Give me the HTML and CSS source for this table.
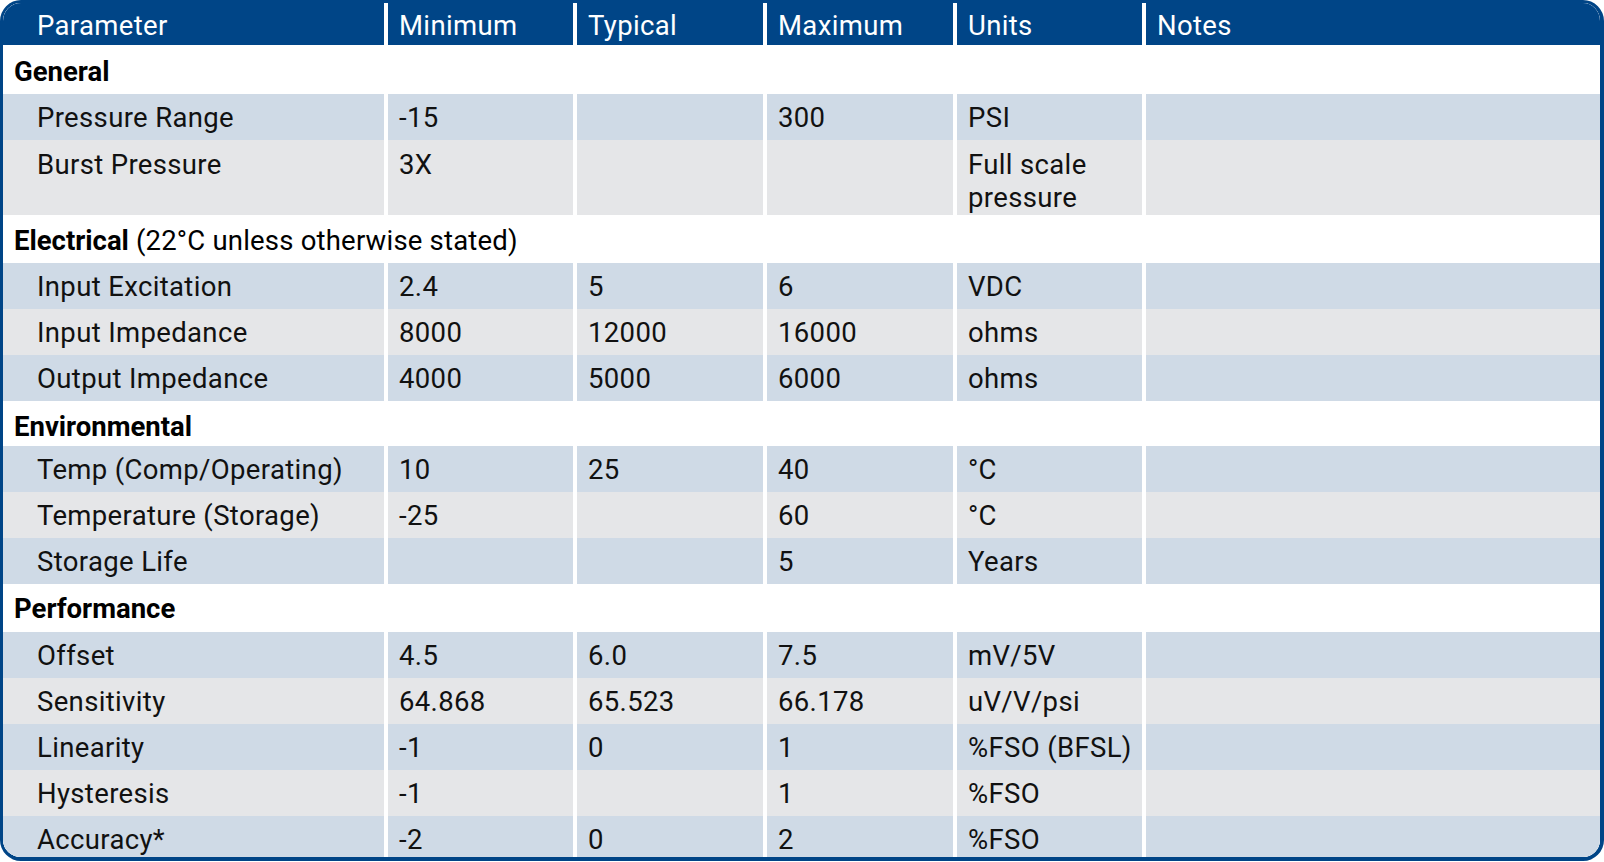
FILE: index.html
```html
<!DOCTYPE html>
<html lang="en">
<head>
<meta charset="utf-8">
<title>Specifications</title>
<link rel="stylesheet" href="styles.css">
</head>
<body>
<div class="spec">
  <div class="row head">
    <div class="cell first">Parameter</div>
    <div class="cell">Minimum</div>
    <div class="cell">Typical</div>
    <div class="cell">Maximum</div>
    <div class="cell">Units</div>
    <div class="cell">Notes</div>
  </div>

  <div class="section top"><b>General</b></div>
  <div class="row blue">
    <div class="cell first">Pressure Range</div><div class="cell">-15</div><div class="cell"></div><div class="cell">300</div><div class="cell">PSI</div><div class="cell"></div>
  </div>
  <div class="row gray tall">
    <div class="cell first">Burst Pressure</div><div class="cell">3X</div><div class="cell"></div><div class="cell"></div><div class="cell">Full scale<br>pressure</div><div class="cell"></div>
  </div>

  <div class="section elec"><b>Electrical</b> (22°C unless otherwise stated)</div>
  <div class="row blue">
    <div class="cell first">Input Excitation</div><div class="cell">2.4</div><div class="cell">5</div><div class="cell">6</div><div class="cell">VDC</div><div class="cell"></div>
  </div>
  <div class="row gray">
    <div class="cell first">Input Impedance</div><div class="cell">8000</div><div class="cell">12000</div><div class="cell">16000</div><div class="cell">ohms</div><div class="cell"></div>
  </div>
  <div class="row blue">
    <div class="cell first">Output Impedance</div><div class="cell">4000</div><div class="cell">5000</div><div class="cell">6000</div><div class="cell">ohms</div><div class="cell"></div>
  </div>

  <div class="section env"><b>Environmental</b></div>
  <div class="row blue">
    <div class="cell first">Temp (Comp/Operating)</div><div class="cell">10</div><div class="cell">25</div><div class="cell">40</div><div class="cell">°C</div><div class="cell"></div>
  </div>
  <div class="row gray">
    <div class="cell first">Temperature (Storage)</div><div class="cell">-25</div><div class="cell"></div><div class="cell">60</div><div class="cell">°C</div><div class="cell"></div>
  </div>
  <div class="row blue">
    <div class="cell first">Storage Life</div><div class="cell"></div><div class="cell"></div><div class="cell">5</div><div class="cell">Years</div><div class="cell"></div>
  </div>

  <div class="section perf"><b>Performance</b></div>
  <div class="row blue">
    <div class="cell first">Offset</div><div class="cell">4.5</div><div class="cell">6.0</div><div class="cell">7.5</div><div class="cell">mV/5V</div><div class="cell"></div>
  </div>
  <div class="row gray">
    <div class="cell first">Sensitivity</div><div class="cell">64.868</div><div class="cell">65.523</div><div class="cell">66.178</div><div class="cell">uV/V/psi</div><div class="cell"></div>
  </div>
  <div class="row blue">
    <div class="cell first">Linearity</div><div class="cell">-1</div><div class="cell">0</div><div class="cell">1</div><div class="cell">%FSO (BFSL)</div><div class="cell"></div>
  </div>
  <div class="row gray">
    <div class="cell first">Hysteresis</div><div class="cell">-1</div><div class="cell"></div><div class="cell">1</div><div class="cell">%FSO</div><div class="cell"></div>
  </div>
  <div class="row blue last">
    <div class="cell first">Accuracy*</div><div class="cell">-2</div><div class="cell">0</div><div class="cell">2</div><div class="cell">%FSO</div><div class="cell"></div>
  </div>
</div>
</body>
</html>
```

FILE: styles.css
```css
html, body {
  margin: 0;
  padding: 0;
  background: #ffffff;
}

body {
  font-family: Roboto, "Liberation Sans", Arial, sans-serif;
  font-size: 27.5px;
  line-height: 32px;
  letter-spacing: 0.35px;
  color: #111111;
}

.spec {
  box-sizing: border-box;
  width: 1604px;
  border-style: solid;
  border-color: #004587;
  border-width: 3px 4px 4px 3px;
  border-radius: 21px;
  overflow: hidden;
  background: #ffffff;
}

.row {
  display: grid;
  grid-template-columns: 381px 185px 186px 186px 185px 1fr;
  column-gap: 4px;
  background: #ffffff;
  height: 46px;
}

.cell {
  box-sizing: border-box;
  padding: 8px 0 0 11px;
  white-space: nowrap;
}

.cell.first {
  padding-left: 34px;
}

.row.head {
  height: 42px;
}

.row.head .cell {
  background: #004587;
  color: #ffffff;
  padding-top: 7px;
}

.row.blue .cell {
  background: #cfdae6;
}

.row.gray .cell {
  background: #e5e6e8;
}

.row.tall {
  height: 75px;
  line-height: 33px;
}

.row.last {
  height: 41px;
}

.section {
  box-sizing: border-box;
  height: 47px;
  padding: 10px 0 0 11px;
  background: #ffffff;
  color: #000000;
  letter-spacing: 0.2px;
}

.section.top {
  height: 49px;
  padding-top: 11px;
}

.section.elec {
  height: 48px;
}

.section.env {
  height: 45px;
}

.section.perf {
  height: 48px;
  padding-top: 9px;
}

.section b {
  font-weight: bold;
  letter-spacing: 0;
}
```
